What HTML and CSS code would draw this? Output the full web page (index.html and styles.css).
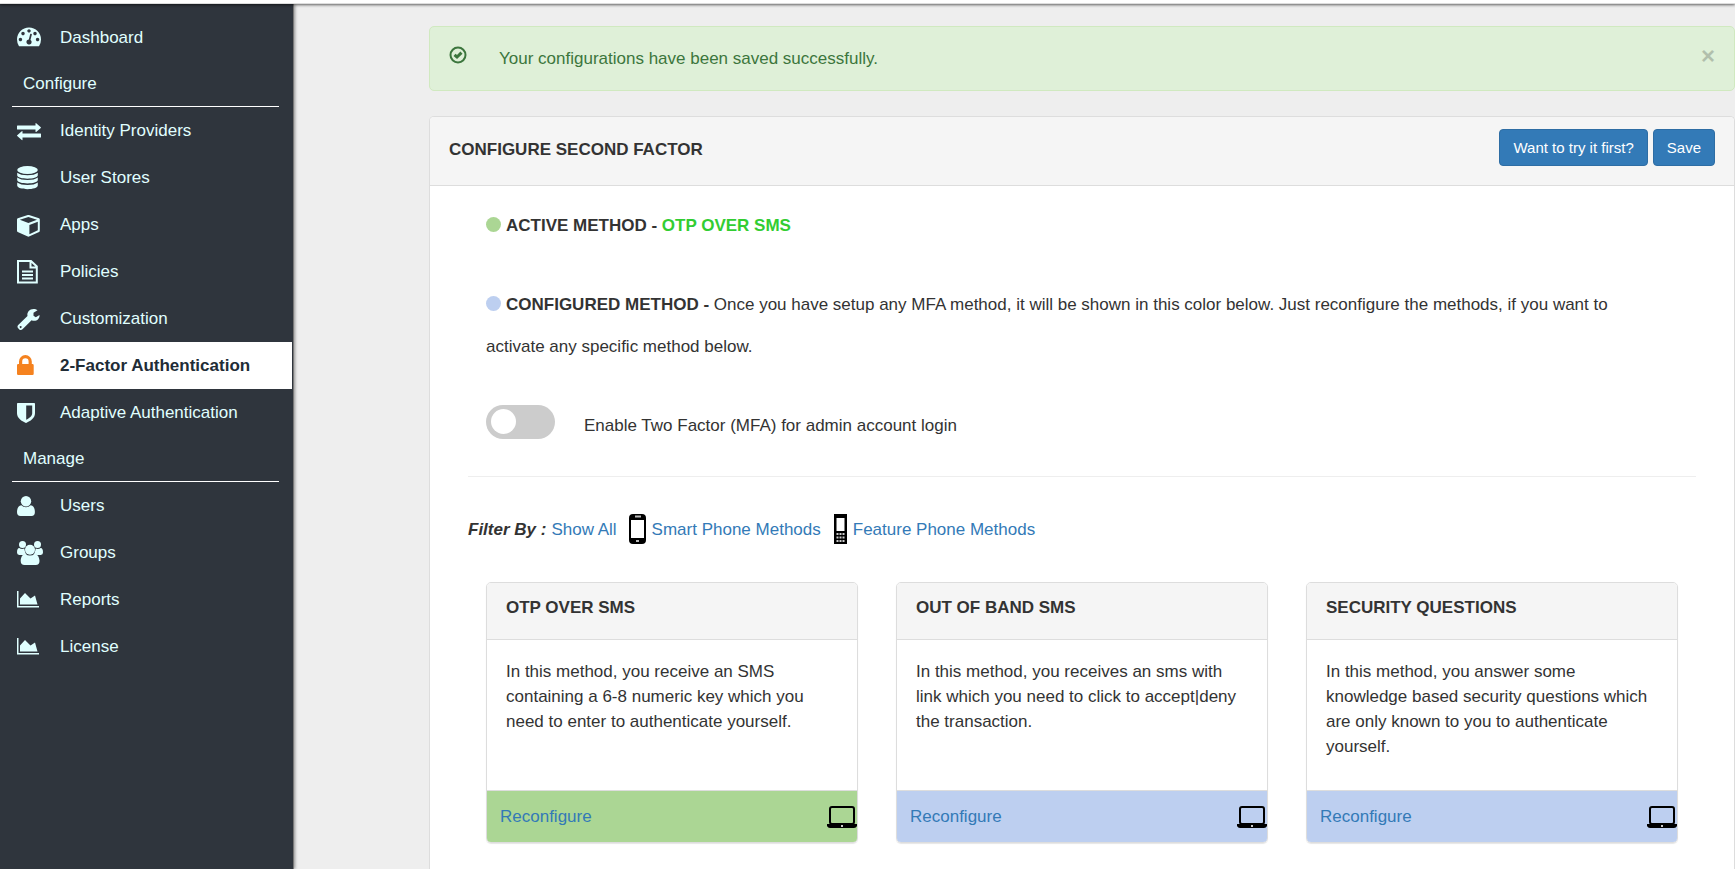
FILE: index.html
```html
<!DOCTYPE html>
<html lang="en">
<head>
  <meta charset="utf-8">
  <title>Configure Second Factor</title>
  <link rel="stylesheet" href="styles.css">
</head>
<body>
  <header class="topbar"></header>
  <div class="layout">
    <nav class="sidebar">
      <a class="nav-item" href="#">
        <svg class="nav-icon" viewBox="0 0 26 24"><path transform="translate(0 -2) scale(.0134)" d="M384 1152q0-53-37.500-90.500t-90.500-37.500-90.500 37.500-37.500 90.500 37.500 90.500 90.500 37.500 90.500-37.500 37.500-90.500zm192-448q0-53-37.500-90.500t-90.500-37.500-90.500 37.500-37.500 90.500 37.500 90.500 90.500 37.500 90.500-37.500 37.500-90.500zm428 481l101-382q6-26-7.500-48.500t-38.500-29.500-48 6.500-30 39.500l-101 382q-60 5-107 43.500t-63 98.500q-20 77 20 146t117 89 146-20 89-117q16-60-6-117t-72-91zm660-33q0-53-37.500-90.500t-90.500-37.500-90.500 37.500-37.500 90.500 37.500 90.500 90.500 37.500 90.500-37.500 37.500-90.500zm-640-640q0-53-37.500-90.500t-90.500-37.500-90.500 37.500-37.500 90.500 37.500 90.500 90.500 37.500 90.500-37.500 37.500-90.500zm448 192q0-53-37.500-90.500t-90.500-37.500-90.500 37.500-37.500 90.500 37.500 90.500 90.500 37.500 90.500-37.500 37.500-90.500zm320 448q0 261-141 483-19 29-54 29h-1402q-35 0-54-29-141-221-141-483 0-182 71-348t191-286 286-191 348-71 348 71 286 191 191 286 71 348z"/></svg>
        Dashboard
      </a>
      <h2 class="nav-section">Configure</h2>
      <a class="nav-item" href="#">
        <svg class="nav-icon" viewBox="0 0 26 24"><path d="M0.500 6.500h18V4.500q0-.7.700-.3l4.600 4q.3.300 0 .7l-4.600 4q-.7.400-.7-.3V10.500h-18q-.5 0-.5-.5V7q0-.5.500-.5zM23.500 14.500h-18v-2q0-.7-.7-.3L.2 16.300q-.3.300 0 .7l4.600 4q.7.400.7-.3v-2.200h18q.5 0 .5-.5v-3q0-.5-.5-.5z"/></svg>
        Identity Providers
      </a>
      <a class="nav-item" href="#">
        <svg class="nav-icon" viewBox="0 0 26 24"><ellipse cx="10.500" cy="4" rx="10.300" ry="4"/><path d="M.2 6.800q3.300 2.500 10.300 2.500t10.300-2.500v2.500c0 4.500-20.600 4.500-20.600 0zM.2 11.600q3.300 2.500 10.300 2.500t10.300-2.500v2.500c0 4.500-20.600 4.500-20.600 0zM.2 16.600q3.300 2.500 10.300 2.500t10.300-2.500v3c0 4.800-20.600 4.800-20.600 0z"/></svg>
        User Stores
      </a>
      <a class="nav-item" href="#">
        <svg class="nav-icon" viewBox="0 0 26 24"><path fill-rule="evenodd" d="M12 2 22 5.300q.8.300.8 1.200v11.300q0 .8-.7 1.200L12 23.500q-.6.300-1.200 0L.7 19Q0 18.600 0 17.800V6.500q0-.9.800-1.200L10.800 2q.6-.2 1.200 0zM11.400 3.900 2.800 6.800l8.600 3.200L20 6.800zM12.400 21.300l8.400-4V8.800l-8.400 3.100z"/></svg>
        Apps
      </a>
      <a class="nav-item" href="#">
        <svg class="nav-icon line" viewBox="0 0 26 24"><path d="M1 1h13l5.800 5.500V22.500H1zM13.500 1v6.500h6.300M5 11.500h11M5 15h11M5 18.500h11"/></svg>
        Policies
      </a>
      <a class="nav-item" href="#">
        <svg class="nav-icon" viewBox="0 0 26 24"><path fill-rule="evenodd" d="M20.500 3.300 16.500 5.700v3.100l2.300 1.400 3.700-2.300c.4 3.200-2.300 5.900-5.300 5.900-1 0-1.800-.2-2.600-.6L5.500 22.300c-1 1-2.200 1-3.200.1l-1.100-1.100c-1-1-.9-2.200 0-3.200l9.300-9.100C9.700 5.300 12.600 2 16.500 2c1.500 0 3 .4 4 1.300zM3.600 19a1 1 0 1 0 .1 0z"/></svg>
        Customization
      </a>
      <a class="nav-item active" href="#">
        <svg class="nav-icon" viewBox="0 0 26 24"><path fill-rule="evenodd" d="M2 10V7.500a6.400 6.400 0 0 1 12.800 0V10h.7q1.200 0 1.200 1.200v8.600q0 1.200-1.200 1.200H1.200Q0 21 0 19.800v-8.600Q0 10 1.200 10zM5.200 10h6.400V7.500a3.200 3.200 0 0 0-6.400 0z"/></svg>
        2-Factor Authentication
      </a>
      <a class="nav-item" href="#">
        <svg class="nav-icon" viewBox="0 0 26 24"><path fill-rule="evenodd" d="M.8 2h16.400q.8 0 .8.800v9.500c0 5-5 8-8.400 9.500q-.6.300-1.200 0C5 20.300 0 17.300 0 12.300V2.800Q0 2 .8 2zM9.200 4.600v14.200c3-1.500 6-3.700 6-6.500V4.600z"/></svg>
        Adaptive Authentication
      </a>
      <h2 class="nav-section">Manage</h2>
      <a class="nav-item" href="#">
        <svg class="nav-icon" viewBox="0 0 26 24"><circle cx="9" cy="7.200" r="5.200"/><path d="M4.300 11.200a6.500 6.500 0 0 0 9.400 0c3 .2 4.200 3.600 4.200 6.800q0 4-3.400 4h-11Q0 22 0 18c0-3.200 1.300-6.600 4.300-6.800z"/></svg>
        Users
      </a>
      <a class="nav-item" href="#">
        <svg class="nav-icon" viewBox="0 0 26 24"><circle cx="5.500" cy="3.600" r="3.500"/><circle cx="20.500" cy="3.600" r="3.500"/><path d="M2.300 7q2 1.400 5 .6.300 3 1.600 5.400-1.600.8-2.600.9H2.200Q0 13.800 0 11.500 0 7 2.300 7zM23.700 7q-2 1.400-5 .6-.3 3-1.600 5.400 1.600.8 2.600.9h4.100q2.200-.1 2.200-2.400 0-4.500-2.300-4.500z"/><circle cx="13" cy="8.700" r="5"/><path d="M8.500 12.700a6.300 6.300 0 0 0 9 0c3 .2 5 3.600 5 7.300q0 4-3.800 4H7.500q-3.800 0-3.800-4c0-3.700 1.800-7.100 4.800-7.300z"/></svg>
        Groups
      </a>
      <a class="nav-item" href="#">
        <svg class="nav-icon" viewBox="0 0 26 24"><path d="M0 3h1.500v15H22v1.500H0zM3 16.500v-6L8 5l5.500 5.500L18 7.500l2.500 9z"/></svg>
        Reports
      </a>
      <a class="nav-item" href="#">
        <svg class="nav-icon" viewBox="0 0 26 24"><path d="M0 3h1.500v15H22v1.500H0zM3 16.500v-6L8 5l5.500 5.500L18 7.500l2.500 9z"/></svg>
        License
      </a>
    </nav>

    <main class="main">
      <div class="alert" role="alert">
        <svg class="alert-icon" viewBox="0 0 18 18"><circle cx="9" cy="9" r="7.500"/><path stroke-width="3" d="M5.500 8.800 8 11l4.500-4.300"/></svg>
        <span class="alert-text">Your configurations have been saved successfully.</span>
        <button class="close" type="button" aria-label="Close">&times;</button>
      </div>

      <section class="panel">
        <div class="panel-heading">
          <h1>CONFIGURE SECOND FACTOR</h1>
          <div class="actions">
            <button class="btn" type="button">Want to try it first?</button>
            <button class="btn" type="button">Save</button>
          </div>
        </div>

        <div class="panel-body">
          <div class="intro">
            <p><span class="dot dot-active"></span><strong>ACTIVE METHOD -</strong> <strong class="method-name">OTP OVER SMS</strong></p>
            <p><span class="dot dot-configured"></span><strong>CONFIGURED METHOD -</strong> Once you have setup any MFA method, it will be shown in this color below. Just reconfigure the methods, if you want to activate any specific method below.</p>
            <div class="toggle-row">
              <input class="switch" type="checkbox" id="admin-mfa">
              <label for="admin-mfa">Enable Two Factor (MFA) for admin account login</label>
            </div>
          </div>

          <div class="filter">
            <strong class="filter-label">Filter By :</strong>
            <a href="#">Show All</a>
            <a class="filter-phone" href="#">
              <svg width="18" height="30" viewBox="0 0 18 30"><rect x="1" y="1" width="15" height="28" rx="3" fill="#fff" stroke="#000" stroke-width="2"/><path d="M1 1h15v5H1zM1 24h15v5H1z"/><path d="M6 2.500h6M7 27h3" stroke="#bbb" stroke-width="2"/></svg>
              Smart Phone Methods
            </a>
            <a class="filter-phone" href="#">
              <svg width="15" height="30" viewBox="0 0 15 30"><path d="M1 0h13v30H1z"/><path d="M3.500 4h8v13h-8z" fill="#fff"/><path d="M3.500 20h8M3.500 23.500h8M3.500 27h8" stroke="#ccc" stroke-width="2" stroke-dasharray="2 1"/></svg>
              Feature Phone Methods
            </a>
          </div>

          <div class="cards">
            <article class="card card-active">
              <h2>OTP OVER SMS</h2>
              <p>In this method, you receive an SMS containing a 6-8 numeric key which you need to enter to authenticate yourself.</p>
              <div class="card-footer">
                <a href="#">Reconfigure</a>
                <svg class="laptop" viewBox="0 0 30 22"><rect x="3" y="1" width="24" height="17" rx="2" fill="none" stroke="#000" stroke-width="2"/><path d="M0 18h30v2q-1 2-3 2H3q-2 0-3-2z"/><path d="M14 19h2v2h-2z" fill="#ccc"/></svg>
              </div>
            </article>
            <article class="card">
              <h2>OUT OF BAND SMS</h2>
              <p>In this method, you receives an sms with link which you need to click to accept|deny the transaction.</p>
              <div class="card-footer">
                <a href="#">Reconfigure</a>
                <svg class="laptop" viewBox="0 0 30 22"><rect x="3" y="1" width="24" height="17" rx="2" fill="none" stroke="#000" stroke-width="2"/><path d="M0 18h30v2q-1 2-3 2H3q-2 0-3-2z"/><path d="M14 19h2v2h-2z" fill="#ccc"/></svg>
              </div>
            </article>
            <article class="card">
              <h2>SECURITY QUESTIONS</h2>
              <p>In this method, you answer some knowledge based security questions which are only known to you to authenticate yourself.</p>
              <div class="card-footer">
                <a href="#">Reconfigure</a>
                <svg class="laptop" viewBox="0 0 30 22"><rect x="3" y="1" width="24" height="17" rx="2" fill="none" stroke="#000" stroke-width="2"/><path d="M0 18h30v2q-1 2-3 2H3q-2 0-3-2z"/><path d="M14 19h2v2h-2z" fill="#ccc"/></svg>
              </div>
            </article>
          </div>
        </div>
      </section>
    </main>
  </div>
</body>
</html>
```
FILE: styles.css
```css
* {
  box-sizing: border-box;
}

body {
  margin: 0;
  min-height: 100vh;
  display: flex;
  flex-direction: column;
  background-color: #eee;
  color: #333;
  font-family: "Liberation Sans", Arial, sans-serif;
  font-size: 17px;
  line-height: 25px;
}

h1, h2, p {
  margin: 0;
  font-size: 17px;
}

a {
  color: #337ab7;
  text-decoration: none;
}

svg {
  flex-shrink: 0;
}

.topbar {
  height: 4px;
  background-color: #fff;
  border-bottom: 1px solid #ddd;
  box-shadow: 0 1px 3px rgba(0, 0, 0, 0.6);
  position: relative;
  z-index: 2;
}

.layout {
  display: flex;
  flex: 1;
}

/* sidebar */
.sidebar {
  flex: 0 0 294px;
  padding: 10px 1px 0 0;
  background-color: #2f353d;
  border-right: 1px solid #777;
  box-shadow: 1px 0 3px rgba(0, 0, 0, 0.4);
}

.nav-item {
  display: flex;
  align-items: center;
  gap: 17px;
  height: 47px;
  padding-left: 17px;
  color: #e0ffff;
}

.nav-icon {
  width: 26px;
  height: 24px;
  fill: currentColor;
}

.nav-icon.line {
  fill: none;
  stroke: currentColor;
  stroke-width: 2;
}

.nav-item.active {
  background-color: #fff;
  color: #212c36;
  font-weight: bold;
}

.nav-item.active .nav-icon {
  color: #f5821f;
}

.nav-section {
  height: 46px;
  margin: 0 13px 0 12px;
  padding: 10px 11px;
  border-bottom: 1px solid #fff;
  color: #e0ffff;
  font-weight: normal;
}

/* content */
.main {
  flex: 1;
  display: flex;
  flex-direction: column;
  padding: 22px 0 0 135px;
}

.alert {
  display: flex;
  padding: 19px;
  margin-bottom: 25px;
  background-color: #dff0d8;
  border: 1px solid #d0e9c0;
  border-radius: 5px;
  color: #3c763d;
}

.alert-icon {
  width: 18px;
  height: 18px;
  fill: none;
  stroke: currentColor;
  stroke-width: 2;
}

.alert-text {
  flex: 1;
  margin-left: 32px;
}

.close {
  height: 20px;
  padding: 0;
  border: 0;
  background: none;
  color: #000;
  font: bold 24px/20px "Liberation Sans", Arial, sans-serif;
  opacity: 0.2;
  cursor: pointer;
}

.panel {
  flex: 1;
  background-color: #fff;
  border: 1px solid #ddd;
  border-bottom: 0;
  border-radius: 5px 5px 0 0;
}

.panel-heading {
  display: flex;
  justify-content: space-between;
  padding: 12px 19px 19px;
  background-color: #f5f5f5;
  border-bottom: 1px solid #ddd;
  border-radius: 4px 4px 0 0;
}

.panel-heading h1 {
  padding-top: 8px;
}

.actions {
  display: flex;
  gap: 5px;
}

.btn {
  height: 37px;
  padding: 0 13px;
  border: 1px solid #2e6da4;
  border-radius: 4px;
  background-color: #337ab7;
  color: #fff;
  font-family: inherit;
  font-size: 15px;
  cursor: pointer;
}

.panel-body {
  padding: 19px 38px 25px;
}

.intro {
  padding: 0 18px 37px;
  border-bottom: 1px solid #eee;
}

.intro p {
  margin-bottom: 37px;
  padding-right: 38px;
  line-height: 42px;
}

.dot {
  display: inline-block;
  width: 15px;
  height: 15px;
  margin-right: 5px;
  border-radius: 50%;
  vertical-align: -1px;
}

.dot-active {
  background-color: #abd694;
}

.dot-configured {
  background-color: #bdcff0;
}

.method-name {
  color: #32cd32;
}

.toggle-row {
  display: flex;
  gap: 29px;
}

.toggle-row label {
  padding-top: 8px;
}

.switch {
  appearance: none;
  width: 69px;
  height: 34px;
  margin: 0;
  padding: 4px 5px;
  border-radius: 17px;
  background-color: #ccc;
  cursor: pointer;
}

.switch::before {
  content: "";
  display: block;
  width: 25px;
  height: 25px;
  border-radius: 50%;
  background-color: #fff;
}

.switch:checked {
  background-color: #2196f3;
}

.switch:checked::before {
  margin-left: auto;
}

.filter {
  display: flex;
  align-items: center;
  gap: 5px;
  padding: 37px 0 38px;
}

.filter-label {
  font-style: italic;
}

.filter-phone {
  display: flex;
  align-items: center;
  gap: 5px;
  margin-left: 7px;
}

.cards {
  display: grid;
  grid-template-columns: repeat(3, 1fr);
  gap: 38px;
  padding: 0 18px;
}

.card {
  display: flex;
  flex-direction: column;
  border: 1px solid #ddd;
  border-radius: 5px;
  box-shadow: 0 1px 1px rgba(0, 0, 0, 0.1);
  overflow: hidden;
}

.card h2 {
  padding: 12px 19px 19px;
  background-color: #f5f5f5;
  border-bottom: 1px solid #ddd;
}

.card p {
  flex: 1;
  min-height: 150px;
  padding: 19px 19px 25px;
}

.card-footer {
  display: flex;
  align-items: center;
  justify-content: space-between;
  height: 52px;
  padding-left: 13px;
  border-top: 1px solid #ddd;
  background-color: #bdcff0;
}

.card-active .card-footer {
  background-color: #abd694;
}

.laptop {
  width: 30px;
  height: 22px;
}
```
